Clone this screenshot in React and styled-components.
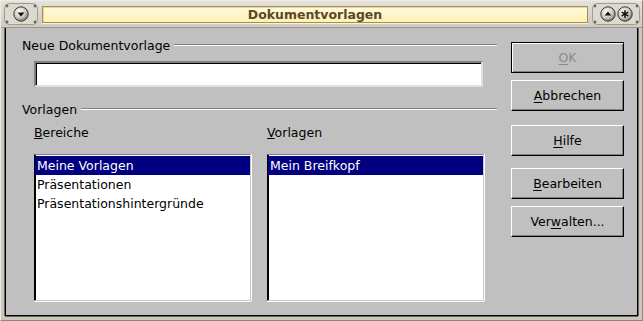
import styled, { createGlobalStyle } from 'styled-components'

const GlobalStyle = createGlobalStyle`
  html, body {
    margin: 0;
    padding: 0;
    background: #c0c0c0;
  }
  body {
    font-family: "DejaVu Sans", "Liberation Sans", sans-serif;
    font-size: 12.5px;
  }
`

const TitleButton = ({ glyph }) => (
  <svg width="16" height="16" viewBox="0 0 16 16">
    <defs>
      <radialGradient id={`g-${glyph}`} cx="40%" cy="35%" r="70%">
        <stop offset="0" stopColor="#ffffff" />
        <stop offset="0.6" stopColor="#c9c6bd" />
        <stop offset="1" stopColor="#6e6a60" />
      </radialGradient>
    </defs>
    <circle cx="8" cy="8" r="7.2" fill={`url(#g-${glyph})`} stroke="#3c3a34" strokeWidth="1" />
    {glyph === 'down' && <path d="M4.6 6.6 H11.4 L8 10.6 Z" fill="#111" />}
    {glyph === 'up' && <path d="M4.6 9.6 H11.4 L8 5.6 Z" fill="#111" />}
    {glyph === 'close' && (
      <g stroke="#111" strokeWidth="1.6" strokeLinecap="round">
        <line x1="8" y1="4.8" x2="8" y2="11.2" />
        <line x1="5.2" y1="6.4" x2="10.8" y2="9.6" />
        <line x1="5.2" y1="9.6" x2="10.8" y2="6.4" />
      </g>
    )}
  </svg>
)

const Corner = ({ w }) => (
  <CornerSvg width={w} height="22" viewBox={`0 0 ${w} 22`}>
    <rect x="0.5" y="0.5" width={w - 1} height="21" rx="5" fill="#dcd9d1" stroke="#9e9a8e" />
    <circle cx="3" cy="3" r="1.4" fill="#6c685e" />
    <circle cx={w - 3} cy="3" r="1.4" fill="#6c685e" />
    <circle cx="3" cy="19" r="1.4" fill="#6c685e" />
    <circle cx={w - 3} cy="19" r="1.4" fill="#6c685e" />
  </CornerSvg>
)

const Mn = ({ children }) => <u>{children}</u>

const buttons = [
  { key: 'ok', pre: '', mn: 'O', post: 'K', def: true, disabled: true, gap: 0 },
  { key: 'ab', pre: '', mn: 'A', post: 'bbrechen', gap: 7 },
  { key: 'hi', pre: '', mn: 'H', post: 'ilfe', gap: 14 },
  { key: 'be', pre: '', mn: 'B', post: 'earbeiten', gap: 12 },
  { key: 've', pre: 'Ver', mn: 'w', post: 'alten...', gap: 7 },
]

const App = () => {
  return (
    <>
      <GlobalStyle />
      <Window>
        <TitleBar>
          <ButtonGroup $w={34}>
            <Corner w={34} />
            <TitleButton glyph="down" />
          </ButtonGroup>
          <TitleField>Dokumentvorlagen</TitleField>
          <ButtonGroup $w={48}>
            <Corner w={48} />
            <TitleButton glyph="up" />
            <TitleButton glyph="close" />
          </ButtonGroup>
        </TitleBar>
        <Client>
          <LeftColumn>
            <Heading>
              <span>Neue Dokumentvorlage</span>
              <Rule />
            </Heading>
            <TextInput />
            <Heading $top={14}>
              <span>Vorlagen</span>
              <Rule />
            </Heading>
            <Lists>
              <ListBlock>
                <SubLabel><Mn>B</Mn>ereiche</SubLabel>
                <ListBox>
                  <Item $selected>Meine Vorlagen</Item>
                  <Item>Präsentationen</Item>
                  <Item>Präsentationshintergründe</Item>
                </ListBox>
              </ListBlock>
              <ListBlock>
                <SubLabel><Mn>V</Mn>orlagen</SubLabel>
                <ListBox>
                  <Item $selected>Mein Breifkopf</Item>
                </ListBox>
              </ListBlock>
            </Lists>
          </LeftColumn>
          <ButtonColumn>
            {buttons.map((b) => (
              <Button key={b.key} $default={b.def} $disabled={b.disabled} $gap={b.gap}>
                {b.pre}<Mn>{b.mn}</Mn>{b.post}
              </Button>
            ))}
          </ButtonColumn>
        </Client>
      </Window>
    </>
  )
}

export default App

const Window = styled.div`
  width: 643px;
  height: 321px;
  box-sizing: border-box;
  display: flex;
  flex-direction: column;
  background: #cbc7bd;
  border: 1px solid #8c887c;
  border-top-color: #eeebe4;
  border-left-color: #eeebe4;
  overflow: hidden;
`

const TitleBar = styled.div`
  height: 26px;
  display: flex;
  align-items: center;
  gap: 4px;
  padding: 0 2px 0 3px;
  background: linear-gradient(#e4e1da, #cfcbc1);
  border-bottom: 1px solid #9a968a;
`

const ButtonGroup = styled.div`
  position: relative;
  width: ${(p) => p.$w}px;
  height: 22px;
  flex: none;
  display: flex;
  align-items: center;
  justify-content: center;
  gap: 1px;

  svg:not(:first-child) {
    position: relative;
  }
`

const CornerSvg = styled.svg`
  position: absolute;
  left: 0;
  top: 0;
`

const TitleField = styled.div`
  flex: 1;
  height: 17px;
  display: flex;
  align-items: center;
  justify-content: center;
  box-sizing: border-box;
  background: linear-gradient(#fffbe0, #fff0b4);
  border: 1px solid #a88e4e;
  box-shadow: inset 1px 1px 0 #e6d6a0, 0 1px 0 #f4f0e6;
  color: #5a4826;
  font-weight: bold;
  font-size: 12.5px;
`

const Client = styled.div`
  flex: 1;
  display: flex;
  margin: 0 4px 4px 4px;
  padding: 9px 13px 0 16px;
  background: #c0c0c0;
  border: 1px solid #000;
  border-top: none;
  box-shadow: -1px 0 0 #6a665c, 1px 0 0 #6a665c, 0 1px 0 #6a665c;
`

const LeftColumn = styled.div`
  width: 475px;
  display: flex;
  flex-direction: column;
`

const Heading = styled.div`
  height: 16px;
  margin-top: ${(p) => p.$top || 0}px;
  display: flex;
  align-items: center;
  gap: 4px;
  color: #000;
  white-space: nowrap;
`

const Rule = styled.div`
  flex: 1;
  height: 1px;
  background: #808080;
  border-bottom: 1px solid #ffffff;
`

const TextInput = styled.div`
  margin: 8px 0 0 12px;
  width: 449px;
  height: 26px;
  box-sizing: border-box;
  background: #fff;
  border: 2px solid;
  border-color: #808080 #dfdfdf #dfdfdf #808080;
  box-shadow: inset 1px 1px 0 #000;
`

const Lists = styled.div`
  display: flex;
  gap: 16px;
  margin: 8px 0 0 12px;
`

const ListBlock = styled.div`
  width: 217px;
  display: flex;
  flex-direction: column;
`

const SubLabel = styled.div`
  height: 16px;
  line-height: 16px;
  color: #000;
`

const ListBox = styled.div`
  margin-top: 13px;
  height: 147px;
  box-sizing: border-box;
  background: #fff;
  border: 1px solid;
  border-color: #808080 #c8c8c8 #c8c8c8 #000;
  box-shadow: inset 1px 0 0 #000, 0 1px 0 #fff, 1px 0 0 #fff;
  padding-top: 1px;
`

const Item = styled.div`
  height: 19px;
  line-height: 19px;
  padding-left: 2px;
  white-space: nowrap;
  background: ${(p) => (p.$selected ? '#000080' : 'transparent')};
  color: ${(p) => (p.$selected ? '#fff' : '#000')};
`

const ButtonColumn = styled.div`
  margin-left: 14px;
  padding-top: 5px;
  width: 113px;
  display: flex;
  flex-direction: column;
`

const Button = styled.div`
  margin-top: ${(p) => p.$gap}px;
  height: 31px;
  box-sizing: border-box;
  display: flex;
  align-items: center;
  justify-content: center;
  background: #c0c0c0;
  color: ${(p) => (p.$disabled ? '#8a8a8a' : '#000')};
  border: 1px solid;
  border-color: ${(p) => (p.$default ? '#000' : '#fff #000 #000 #fff')};
  box-shadow: ${(p) =>
    p.$default
      ? 'inset 1px 1px 0 #fff, inset -1px -1px 0 #808080'
      : 'inset -1px -1px 0 #808080'};

  u {
    text-underline-offset: 2px;
  }
`
